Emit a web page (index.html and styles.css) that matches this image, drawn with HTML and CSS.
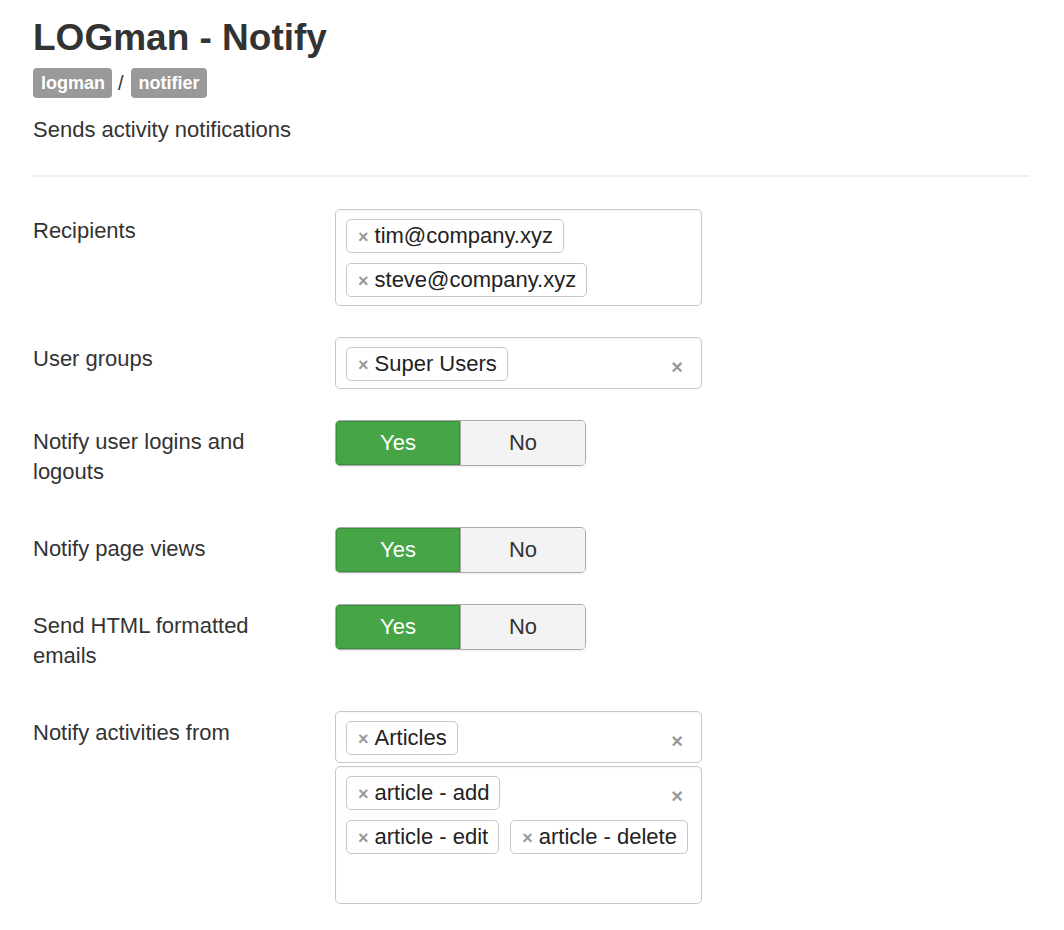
FILE: index.html
```html
<!DOCTYPE html>
<html>
<head>
<meta charset="utf-8">
<link rel="stylesheet" href="styles.css">
</head>
<body>
<div class="page">
  <h1 class="title">LOGman - Notify</h1>
  <div class="crumbs"><span class="badge">logman</span><span class="sep">/</span><span class="badge">notifier</span></div>
  <p class="desc">Sends activity notifications</p>
  <hr class="rule">

  <div class="form">
    <div class="row">
      <div class="label">Recipients</div>
      <div class="control">
        <div class="select multi">
          <div class="tags">
            <span class="tag"><span class="x">×</span>tim@company.xyz</span>
            <span class="tag"><span class="x">×</span>steve@company.xyz</span>
          </div>
        </div>
      </div>
    </div>

    <div class="row">
      <div class="label">User groups</div>
      <div class="control">
        <div class="select">
          <div class="tags">
            <span class="tag"><span class="x">×</span>Super Users</span>
          </div>
          <span class="clear">×</span>
        </div>
      </div>
    </div>

    <div class="row">
      <div class="label">Notify user logins and logouts</div>
      <div class="control">
        <div class="toggle"><span class="yes">Yes</span><span class="no">No</span></div>
      </div>
    </div>

    <div class="row">
      <div class="label">Notify page views</div>
      <div class="control">
        <div class="toggle"><span class="yes">Yes</span><span class="no">No</span></div>
      </div>
    </div>

    <div class="row">
      <div class="label">Send HTML formatted emails</div>
      <div class="control">
        <div class="toggle"><span class="yes">Yes</span><span class="no">No</span></div>
      </div>
    </div>

    <div class="row">
      <div class="label">Notify activities from</div>
      <div class="control stack">
        <div class="select">
          <div class="tags">
            <span class="tag"><span class="x">×</span>Articles</span>
          </div>
          <span class="clear">×</span>
        </div>
        <div class="select tall">
          <div class="lines">
            <div class="tags free">
              <span class="tag"><span class="x">×</span>article - add</span>
            </div>
            <div class="tags free">
              <span class="tag"><span class="x">×</span>article - edit</span>
              <span class="tag"><span class="x">×</span>article - delete</span>
            </div>
          </div>
          <span class="clear">×</span>
        </div>
      </div>
    </div>
  </div>
</div>
</body>
</html>
```

FILE: styles.css
```css
html, body {
  margin: 0;
  padding: 0;
  background: #fff;
}
body {
  font-family: "Liberation Sans", Arial, Helvetica, sans-serif;
  color: #333;
  font-size: 22px;
  line-height: 30px;
}
.page {
  padding: 12px 34px 0 33px;
}
.title {
  margin: 0;
  font-size: 37px;
  line-height: 52px;
  font-weight: bold;
  color: #333;
}
.crumbs {
  display: flex;
  align-items: center;
  margin-top: 4px;
  height: 30px;
}
.badge {
  display: inline-block;
  background: #999;
  color: #fff;
  font-weight: bold;
  font-size: 18px;
  line-height: 30px;
  padding: 0 7px 0 8px;
  border-radius: 4px;
}
.sep {
  font-size: 20px;
  margin: 0 7px 0 6px;
  color: #333;
}
.desc {
  margin: 17px 0 0;
  font-size: 22px;
  line-height: 30px;
}
.rule {
  border: 0;
  border-top: 2px solid #eee;
  margin: 30px 0 32px;
  height: 0;
}
.form {
  display: flex;
  flex-direction: column;
  gap: 31px;
}
.row {
  display: flex;
  align-items: flex-start;
}
.label {
  width: 236px;
  margin-right: 66px;
  padding: 7px 0 9px;
  font-size: 22px;
  line-height: 30px;
}
.control {
  width: 367px;
}
.stack {
  display: flex;
  flex-direction: column;
  gap: 3px;
}
.select {
  position: relative;
  box-sizing: border-box;
  width: 367px;
  border: 1px solid #c8c8c8;
  border-radius: 5px;
  background: #fff;
  padding: 9px 10px 7px;
  box-shadow: inset 0 1px 2px rgba(0,0,0,0.04);
}
.select.multi {
  padding-bottom: 8px;
}
.select.tall {
  min-height: 138px;
}
.lines {
  display: flex;
  flex-direction: column;
  gap: 10px;
}
.tags {
  display: flex;
  flex-wrap: wrap;
  gap: 10px 11px;
  padding-right: 30px;
}
.select.multi .tags,
.tags.free {
  padding-right: 0;
}
.tag {
  display: inline-flex;
  align-items: center;
  box-sizing: border-box;
  height: 34px;
  border: 1px solid #c8c8c8;
  border-radius: 5px;
  padding: 0 10px 0 11px;
  font-size: 22px;
  color: #222;
  background: #fff;
  white-space: nowrap;
}
.x {
  color: #999;
  font-size: 18px;
  font-weight: bold;
  margin-right: 6px;
  position: relative;
  top: 1px;
}
.clear {
  position: absolute;
  right: 18px;
  top: 17px;
  color: #999;
  font-size: 20px;
  font-weight: bold;
  line-height: 24px;
}
.toggle {
  display: flex;
  width: 251px;
  height: 46px;
  box-sizing: border-box;
  border: 1px solid #aaa;
  border-radius: 5px;
  overflow: hidden;
  box-shadow: 0 1px 2px rgba(0,0,0,0.08);
}
.toggle span {
  flex: 1 1 0;
  display: flex;
  align-items: center;
  justify-content: center;
  font-size: 22px;
}
.yes {
  background: #46a546;
  color: #fff;
  box-shadow: inset 0 0 0 1px #3a8f3a;
}
.no {
  background: #f3f3f3;
  color: #333;
  border-left: 1px solid #aaa;
}
```
